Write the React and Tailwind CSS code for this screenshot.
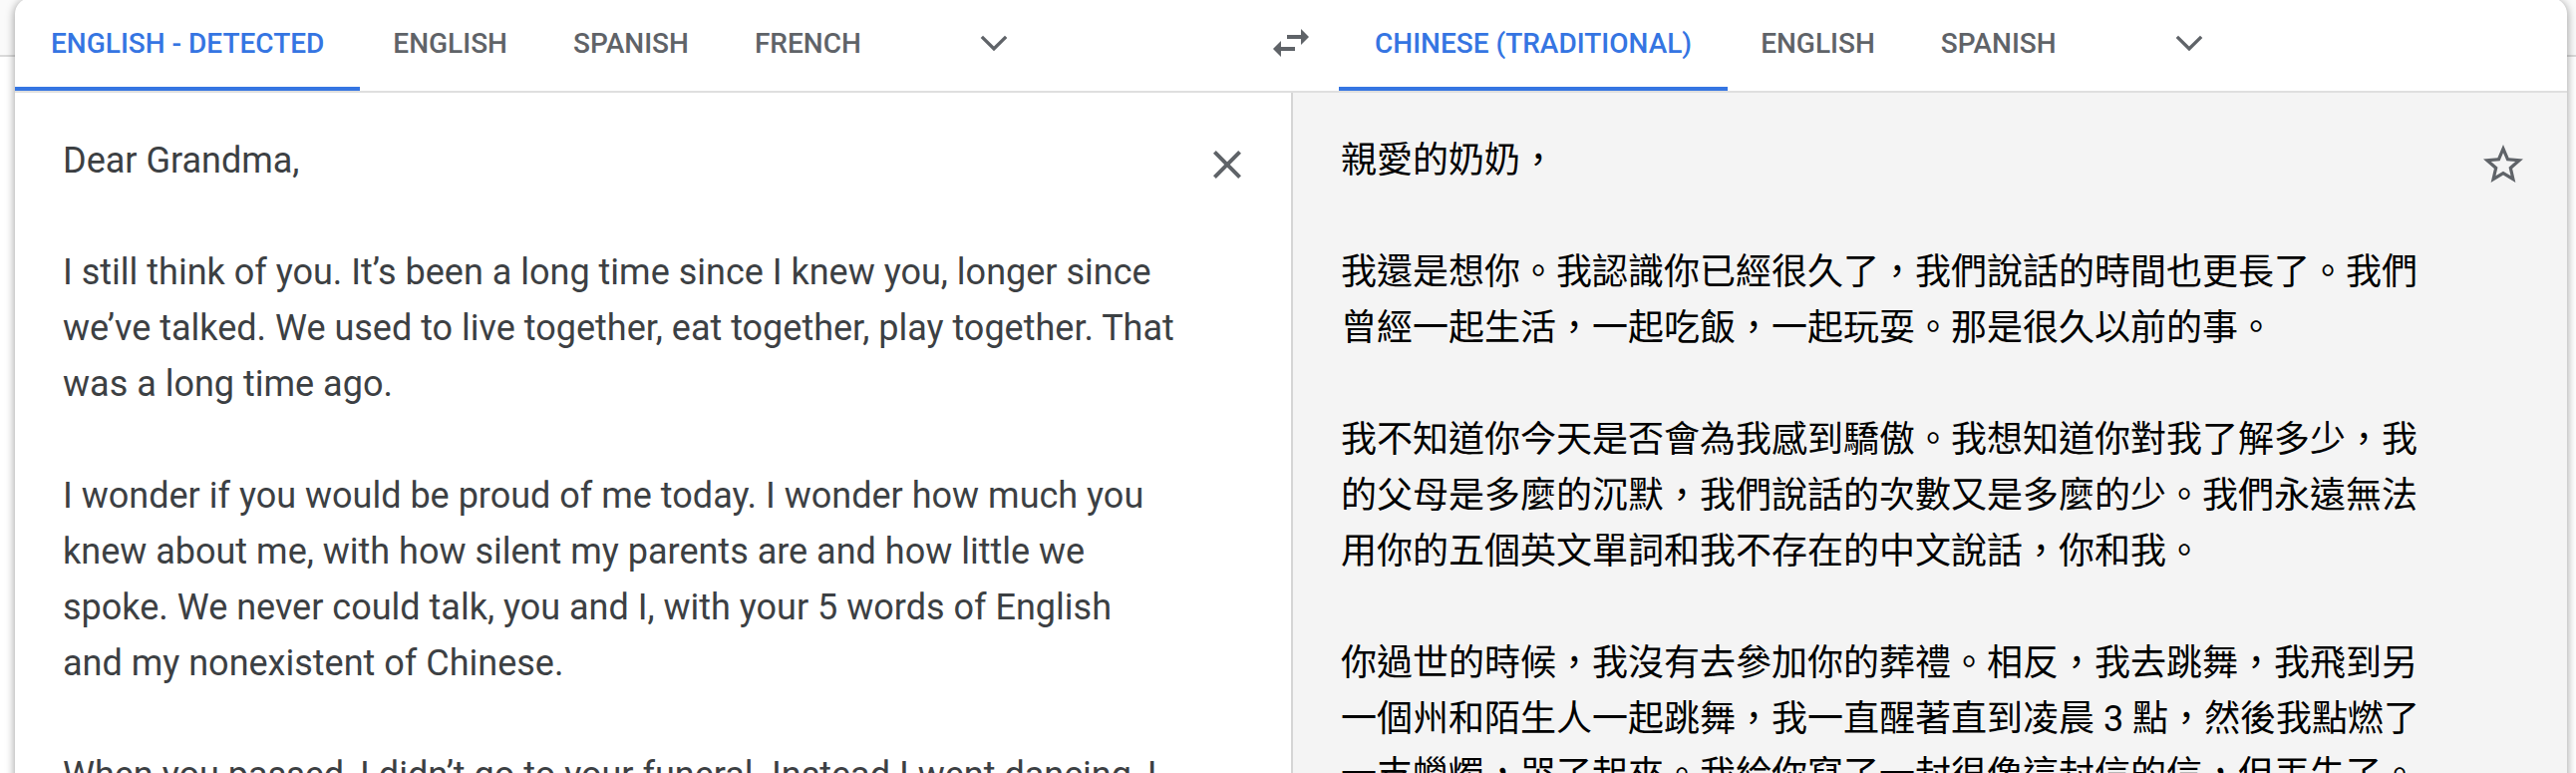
import React from "react";

const source = [
  "Dear Grandma,",
  "I still think of you. It’s been a long time since I knew you, longer since we’ve talked. We used to live together, eat together, play together. That was a long time ago.",
  "I wonder if you would be proud of me today. I wonder how much you knew about me, with how silent my parents are and how little we spoke. We never could talk, you and I, with your 5 words of English and my nonexistent of Chinese.",
  "When you passed, I didn’t go to your funeral. Instead I went dancing, I",
].join("\n\n");

const translation = [
  "親愛的奶奶，",
  "我還是想你。我認識你已經很久了，我們說話的時間也更長了。我們曾經一起生活，一起吃飯，一起玩耍。那是很久以前的事。",
  "我不知道你今天是否會為我感到驕傲。我想知道你對我了解多少，我的父母是多麼的沉默，我們說話的次數又是多麼的少。我們永遠無法用你的五個英文單詞和我不存在的中文說話，你和我。",
  "你過世的時候，我沒有去參加你的葬禮。相反，我去跳舞，我飛到另一個州和陌生人一起跳舞，我一直醒著直到凌晨 3 點，然後我點燃了一支蠟燭，哭了起來。我給你寫了一封很像這封信的信，但丟失了。",
];

function Icon({ d, className = "size-12" }) {
  return (
    <svg viewBox="0 0 24 24" fill="currentColor" aria-hidden="true" className={className}>
      <path d={d} />
    </svg>
  );
}

const CHEVRON = "M5.41 7.59L4 9l8 8 8-8-1.41-1.41L12 14.17";
const SWAP = "M6.99 11L3 15l3.99 4v-3H14v-2H6.99v-3zM21 9l-3.99-4v3H10v2h7.01v3L21 9z";
const CLOSE = "M19 6.41L17.59 5 12 10.59 6.41 5 5 6.41 10.59 12 5 17.59 6.41 19 12 13.41 17.59 19 19 17.59 13.41 12z";
const STAR =
  "M22 9.24l-7.19-.62L12 2 9.19 8.63 2 9.24l5.46 4.73L5.82 21 12 17.27 18.18 21l-1.63-7.03L22 9.24zM12 15.4l-3.76 2.27 1-4.28-3.32-2.88 4.38-.38L12 6.1l1.71 4.04 4.38.38-3.32 2.88 1 4.28L12 15.4z";

function Tabs({ label, items }) {
  return (
    <div role="tablist" aria-label={label} className="flex">
      {items.map((item, i) => (
        <button
          key={item}
          type="button"
          role="tab"
          aria-selected={i === 0}
          className={
            i === 0
              ? "h-[91px] whitespace-nowrap border-b-4 border-[#3575e2] px-9 text-[28px] font-medium leading-9 text-[#3575e2]"
              : "h-[91px] whitespace-nowrap border-b-4 border-transparent px-[33px] text-[28px] font-medium leading-9 text-[#5f6368]"
          }
        >
          {item}
        </button>
      ))}
    </div>
  );
}

function MoreButton({ label }) {
  return (
    <button type="button" aria-label={label} className="ml-17 flex h-[86px] items-center px-3 text-[#5f6368]">
      <Icon d={CHEVRON} className="size-10" />
    </button>
  );
}

export default function App() {
  return (
    <div className="h-screen overflow-hidden bg-white font-[Roboto,'Noto_Sans_CJK_TC',sans-serif]">
      <div className="h-[57px] border-b-2 border-[#dadada] bg-[#fafafa]" />
      <main className="relative -mt-[59px] mr-[9px] ml-[15px] flex min-h-[840px] flex-col overflow-hidden rounded-2xl bg-white shadow-[0_2px_9px_1px_rgba(0,0,0,0.35)]">
        <header className="grid grid-cols-[minmax(0,1fr)_96px_minmax(0,1fr)] border-b-2 border-[#dfdfdf] pt-[2px]">
          <div className="flex">
            <Tabs label="Source language" items={["ENGLISH - DETECTED", "ENGLISH", "SPANISH", "FRENCH"]} />
            <MoreButton label="More source languages" />
          </div>
          <button type="button" aria-label="Swap languages" className="flex h-[86px] items-center justify-center text-[#5f6368]">
            <Icon d={SWAP} />
          </button>
          <div className="flex">
            <Tabs label="Target language" items={["CHINESE (TRADITIONAL)", "ENGLISH", "SPANISH"]} />
            <MoreButton label="More target languages" />
          </div>
        </header>
        <div className="grid flex-1 grid-cols-2">
          <section className="flex items-start">
            <textarea
              aria-label="Source text"
              defaultValue={source}
              spellCheck={false}
              className="h-[747px] flex-1 resize-none overflow-hidden bg-transparent pt-10 pr-7 pl-12 text-4xl leading-[56px] text-[#3c4043] outline-none"
            />
            <button type="button" aria-label="Clear source text" className="mt-12 mr-10 text-[#5f6368]">
              <Icon d={CLOSE} />
            </button>
          </section>
          <section className="flex items-start border-l-2 border-[#d5d5d5] bg-[#f4f4f4]">
            <div lang="zh-TW" className="flex flex-1 flex-col gap-14 pt-10 pr-7 pl-12 text-4xl leading-[56px] text-black">
              {translation.map((p) => (
                <p key={p}>{p}</p>
              ))}
            </div>
            <button type="button" aria-label="Save translation" className="mt-12 mr-10 text-[#5f6368]">
              <Icon d={STAR} />
            </button>
          </section>
        </div>
      </main>
    </div>
  );
}
